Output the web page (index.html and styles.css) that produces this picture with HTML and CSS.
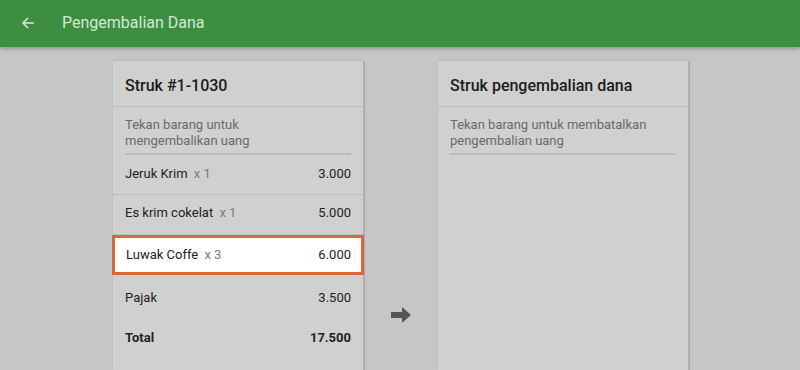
FILE: index.html
```html
<!DOCTYPE html>
<html lang="id">
<head>
  <meta charset="UTF-8">
  <meta name="viewport" content="width=device-width, initial-scale=1.0">
  <link rel="stylesheet" href="styles.css">
</head>
<body>
  <header class="appbar">
    <span class="back">
      <svg width="14" height="14" viewBox="0 0 14 14"><path d="M13 7H2M7 2L2 7l5 5" fill="none" stroke="#d7ead7" stroke-width="1.6"/></svg>
    </span>
    <h1>Pengembalian Dana</h1>
  </header>

  <main class="panes">
    <section class="card">
      <h2 class="card-title">Struk #1-1030</h2>
      <p class="hint">Tekan barang untuk<br>mengembalikan uang</p>
      <div class="row">
        <span class="name">Jeruk Krim <span class="qty">x 1</span></span>
        <span class="amount">3.000</span>
      </div>
      <div class="row">
        <span class="name">Es krim cokelat <span class="qty">x 1</span></span>
        <span class="amount">5.000</span>
      </div>
      <div class="row selected">
        <span class="name">Luwak Coffe <span class="qty">x 3</span></span>
        <span class="amount">6.000</span>
      </div>
      <div class="row plain">
        <span class="name">Pajak</span>
        <span class="amount">3.500</span>
      </div>
      <div class="row plain total">
        <span class="name">Total</span>
        <span class="amount">17.500</span>
      </div>
    </section>

    <div class="gutter">
      <svg width="20" height="16" viewBox="0 0 20 16"><path d="M0 5h11V0l9 8-9 8v-5H0z" fill="#555"/></svg>
    </div>

    <section class="card">
      <h2 class="card-title">Struk pengembalian dana</h2>
      <p class="hint">Tekan barang untuk membatalkan<br>pengembalian uang</p>
    </section>
  </main>
</body>
</html>
```

FILE: styles.css
```css
* {
  box-sizing: border-box;
}

body {
  margin: 0;
  font-family: Roboto, "Noto Sans", Arial, sans-serif;
  background-color: #c6c6c6;
  height: 370px;
  overflow: hidden;
}

.appbar {
  display: flex;
  align-items: center;
  height: 47px;
  background-color: #3d8e41;
  box-shadow: 0 2px 4px rgba(0, 0, 0, 0.25);
  position: relative;
}

.appbar .back {
  display: flex;
  width: 62px;
  padding-left: 21px;
  margin-top: -2px;
}

.appbar h1 {
  margin: 0 0 2px;
  font-size: 16px;
  font-weight: 400;
  color: #d4e8d4;
}

.panes {
  display: flex;
  justify-content: center;
  height: 323px;
  padding-top: 14px;
  padding-left: 1px;
}

.card {
  width: 250px;
  background-color: #d0d0d0;
  box-shadow: 1px 0 0 #b4b4b4, 2px 0 0 #a8a8a8, 0 -1px 2px rgba(0, 0, 0, 0.08);
}

.card-title {
  margin: 0;
  height: 46px;
  padding: 15px 12px 0;
  font-size: 16px;
  font-weight: 500;
  color: #1c1c1c;
  border-bottom: 1px solid #bcbcbc;
}

.hint {
  margin: 0 12px;
  padding: 10px 0 4px;
  font-size: 13px;
  line-height: 16px;
  color: #6a6a6a;
  border-bottom: 2px solid #bdbdbd;
}

.row {
  display: flex;
  justify-content: space-between;
  align-items: center;
  height: 40px;
  padding: 0 12px 3px;
  font-size: 13px;
  color: #222;
  border-bottom: 1px solid #bdbdbd;
}

.row + .row {
  height: 40px;
  padding-bottom: 5px;
}

.row .qty {
  margin-left: 3px;
  color: #7a7a7a;
}

.row.selected {
  height: 40px;
  margin: 0 -1px;
  padding: 0 10px 2px 11px;
  background-color: #fff;
  border: 3px solid #d6683c;
}

.row.plain {
  border-bottom: none;
}

.row.plain:not(.total) {
  height: 44px;
  padding: 1px 12px 0;
}

.row.total {
  height: 34px;
  padding: 2px 12px 0;
  font-weight: 700;
}

.gutter {
  display: flex;
  justify-content: center;
  width: 75px;
  padding-top: 246px;
  padding-left: 1px;
}
```
